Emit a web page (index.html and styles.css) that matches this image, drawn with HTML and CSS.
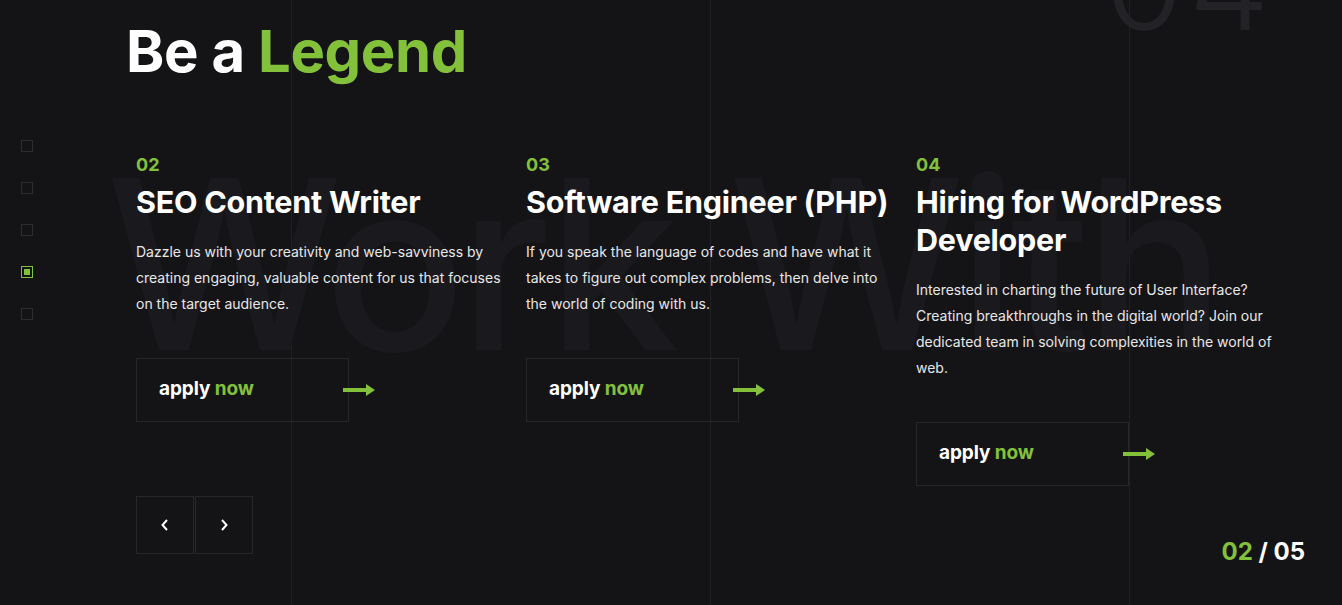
FILE: index.html
```html
<!DOCTYPE html>
<html lang="en">
<head>
<meta charset="utf-8">
<title>Be a Legend</title>
<link rel="stylesheet" href="styles.css">
</head>
<body>
<div class="page">
  <div class="watermark-num">04</div>
  <div class="watermark">Work With</div>

  <ul class="dots">
    <li class="dot"></li>
    <li class="dot"></li>
    <li class="dot"></li>
    <li class="dot active"></li>
    <li class="dot"></li>
  </ul>

  <main class="content">
    <h1 class="title">Be a <span class="green">Legend</span></h1>

    <section class="slider">
      <article class="card">
        <div class="num">02</div>
        <h2 class="job">SEO Content Writer</h2>
        <p class="desc">Dazzle us with your creativity and web-savviness by creating engaging, valuable content for us that focuses on the target audience.</p>
        <a class="apply" href="#"><span>apply <span class="green">now</span></span>
          <svg class="arrow" width="32" height="12" viewBox="0 0 32 12"><path d="M0 4h23V0l9 6-9 6V8H0z" fill="#84c13a"/></svg></a>
      </article>
      <article class="card">
        <div class="num">03</div>
        <h2 class="job">Software Engineer (PHP)</h2>
        <p class="desc">If you speak the language of codes and have what it takes to figure out complex problems, then delve into the world of coding with us.</p>
        <a class="apply" href="#"><span>apply <span class="green">now</span></span>
          <svg class="arrow" width="32" height="12" viewBox="0 0 32 12"><path d="M0 4h23V0l9 6-9 6V8H0z" fill="#84c13a"/></svg></a>
      </article>
      <article class="card">
        <div class="num">04</div>
        <h2 class="job">Hiring for WordPress Developer</h2>
        <p class="desc">Interested in charting the future of User Interface? Creating breakthroughs in the digital world? Join our dedicated team in solving complexities in the world of web.</p>
        <a class="apply" href="#"><span>apply <span class="green">now</span></span>
          <svg class="arrow" width="32" height="12" viewBox="0 0 32 12"><path d="M0 4h23V0l9 6-9 6V8H0z" fill="#84c13a"/></svg></a>
      </article>
    </section>

    <footer class="footer">
      <div class="nav">
        <button class="nav-btn" aria-label="previous"><svg width="10" height="14" viewBox="0 0 10 14"><path d="M7 2L2.5 7 7 12" fill="none" stroke="#fff" stroke-width="2"/></svg></button>
        <button class="nav-btn" aria-label="next"><svg width="10" height="14" viewBox="0 0 10 14"><path d="M3 2l4.5 5L3 12" fill="none" stroke="#fff" stroke-width="2"/></svg></button>
      </div>
      <div class="counter"><span class="green">02</span> / 05</div>
    </footer>
  </main>
</div>
</body>
</html>
```

FILE: styles.css
```css
* { box-sizing: border-box; }
html, body { margin: 0; padding: 0; }
body {
  background: #141417;
  color: #fff;
  font-family: "Inter", "Noto Sans", sans-serif;
  overflow: hidden;
}
.page {
  position: relative;
  width: 1342px;
  height: 605px;
  overflow: hidden;
  background-color: #141417;
  background-image:
    linear-gradient(#202025, #202025),
    linear-gradient(#202025, #202025),
    linear-gradient(#202025, #202025);
  background-size: 1px 100%, 1px 100%, 1px 100%;
  background-position: 291px 0, 710px 0, 1129px 0;
  background-repeat: no-repeat;
}
.green { color: #84c13a; }

.watermark {
  position: absolute;
  left: 106px;
  top: 146px;
  font-family: "Inter", sans-serif;
  font-size: 236px;
  line-height: 1;
  font-weight: 500;
  color: #1a1a1e;
  white-space: nowrap;
  letter-spacing: -7px;
  pointer-events: none;
}
.watermark-num {
  position: absolute;
  left: 1104px;
  top: -82px;
  font-family: "Inter", sans-serif;
  font-size: 130px;
  line-height: 1;
  font-weight: 300;
  color: #222227;
  letter-spacing: 4px;
}

.dots {
  position: absolute;
  left: 21px;
  top: 140px;
  margin: 0;
  padding: 0;
  list-style: none;
  display: flex;
  flex-direction: column;
  gap: 30px;
}
.dot {
  width: 12px;
  height: 12px;
  border: 1px solid #2c2c31;
  display: flex;
  align-items: center;
  justify-content: center;
}
.dot.active { border-color: #84c13a; }
.dot.active::after {
  content: "";
  width: 6px;
  height: 6px;
  background: #84c13a;
}

.content {
  position: relative;
  padding: 22px 37px 0 126px;
}
.title {
  margin: 0;
  font-size: 58px;
  line-height: 58px;
  font-weight: 700;
  letter-spacing: -0.4px;
}

.slider {
  margin-top: 73px;
  margin-left: 10px;
  height: 343px;
  display: flex;
  gap: 20px;
  align-items: flex-start;
}
.card {
  width: 370px;
  display: flex;
  flex-direction: column;
  align-items: flex-start;
}
.num {
  font-size: 18px;
  line-height: 24px;
  font-weight: 700;
  color: #84c13a;
}
.job {
  margin: 6px 0 0;
  font-size: 30.5px;
  line-height: 38px;
  font-weight: 700;
  letter-spacing: -0.25px;
  width: 380px;
}
.desc {
  margin: 18px 0 0;
  font-size: 14px;
  line-height: 26px;
  color: #e8e8e8;
  width: 374px;
  letter-spacing: 0;
}
.apply {
  margin-top: 41px;
  width: 213px;
  height: 64px;
  border: 1px solid #26262b;
  display: flex;
  align-items: center;
  justify-content: space-between;
  padding-left: 22px;
  padding-bottom: 3px;
  color: #fff;
  text-decoration: none;
  font-size: 19px;
  font-weight: 700;
  letter-spacing: -0.1px;
}
.arrow {
  margin-right: -27px;
  margin-top: 3px;
  display: block;
}

.footer {
  margin-left: 10px;
  display: flex;
  justify-content: space-between;
  align-items: flex-end;
}
.nav { display: flex; gap: 1px; }
.nav-btn {
  width: 58px;
  height: 58px;
  background: transparent;
  border: 1px solid #26262b;
  display: flex;
  align-items: center;
  justify-content: center;
  padding: 0;
}
.counter {
  font-size: 24px;
  line-height: 25px;
  font-weight: 700;
  margin-bottom: -10px;
  letter-spacing: 0;
}
```
